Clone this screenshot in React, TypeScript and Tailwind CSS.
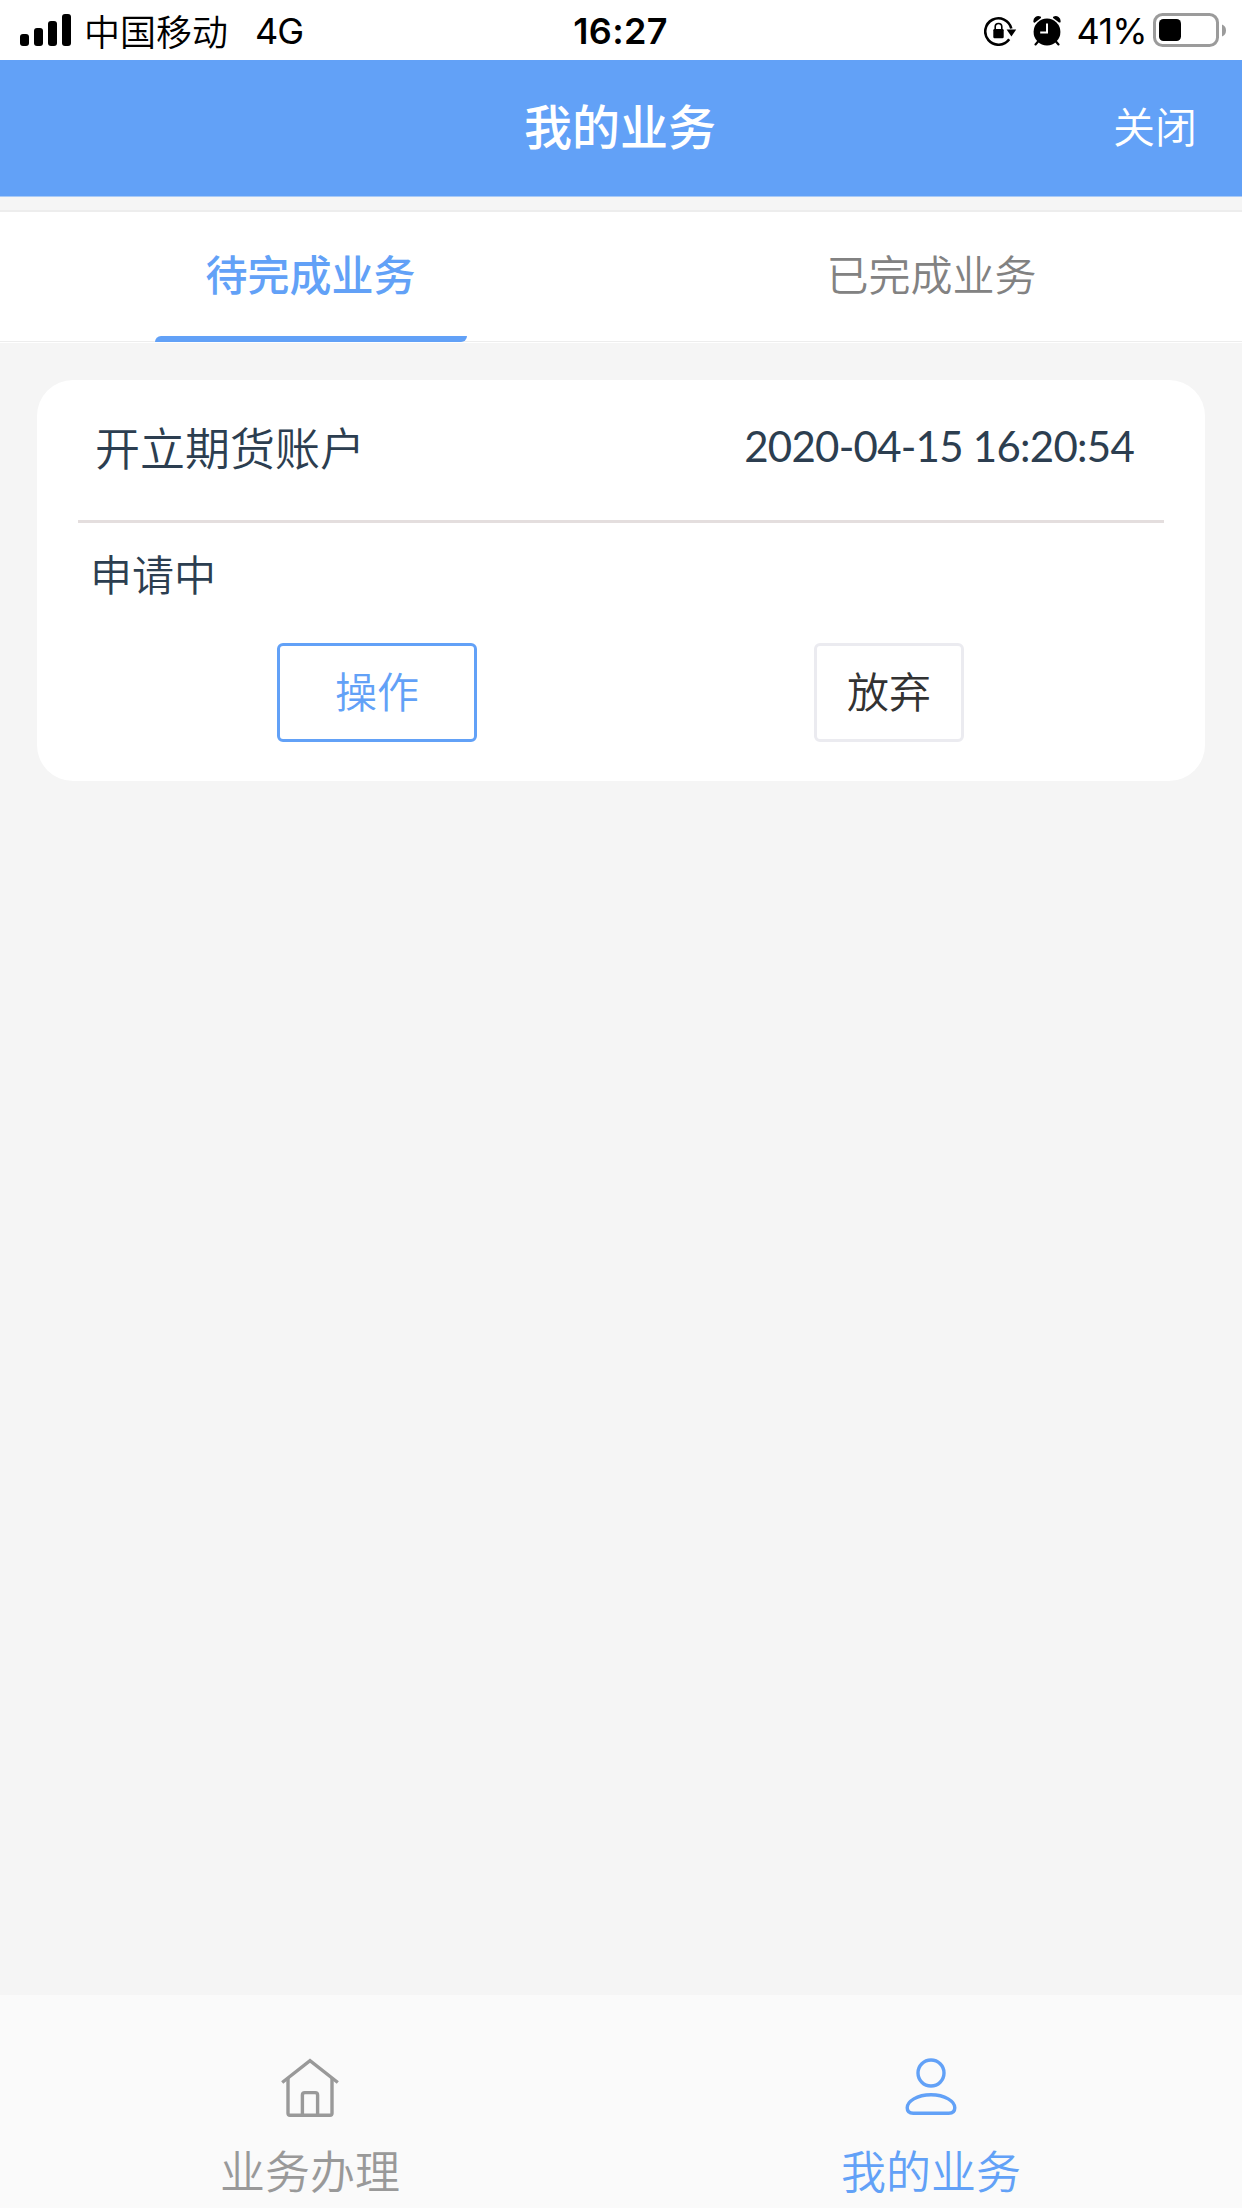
import { useState } from 'react';
import clsx from 'clsx';

interface Business {
  id: number;
  name: string;
  time: string;
  status: string;
}

const pending: Business[] = [
  { id: 1, name: '开立期货账户', time: '2020-04-15 16:20:54', status: '申请中' },
];

const tabs = ['待完成业务', '已完成业务'];

const SignalIcon = () => (
  <svg width="52" height="32" viewBox="0 0 52 32">
    <rect x="0" y="20" width="9" height="12" rx="3" />
    <rect x="14" y="14" width="9" height="18" rx="3" />
    <rect x="28" y="7" width="9" height="25" rx="3" />
    <rect x="42" y="0" width="9" height="32" rx="3" />
  </svg>
);

const RotationLockIcon = () => (
  <svg width="34" height="30" viewBox="0 0 34 30" fill="none">
    <path d="M27.3 12.5A13.2 13.2 0 1 0 25.2 23.2" stroke="#000" strokeWidth="2.6" />
    <path d="M22.6 13.5h9.6l-4.8 7z" fill="#000" />
    <path d="M11.2 14v-3.2a3.3 3.3 0 0 1 6.6 0V14" stroke="#000" strokeWidth="1.6" />
    <rect x="9.300" y="13" width="10.400" height="9.200" rx="1.200" fill="#000" />
  </svg>
);

const AlarmIcon = () => (
  <svg width="28" height="30" viewBox="0 0 28 30" fill="none">
    <path d="M1.4 5.6A4 4 0 0 1 7 1.500z M21 1.500A4 4 0 0 1 26.600 5.600z" fill="#000" stroke="#000" strokeWidth="2" strokeLinejoin="round" />
    <path d="M5.5 25l-3 3.400M22.500 25l3 3.400" stroke="#000" strokeWidth="2.200" strokeLinecap="round" />
    <circle cx="14" cy="16" r="13.400" fill="#000" />
    <path d="M14 7.600v9H7.200" stroke="#fff" strokeWidth="2" />
  </svg>
);

const BatteryIcon = () => (
  <svg width="74" height="34" viewBox="0 0 74 34" fill="none">
    <rect x="1.5" y="1.5" width="63" height="31" rx="8" stroke="#9b9b9b" strokeWidth="3" />
    <rect x="6" y="6" width="22" height="22" rx="4.5" fill="#000" />
    <path d="M69 11.5a6.5 6.5 0 0 1 0 12z" fill="#9b9b9b" />
  </svg>
);

const HomeIcon = () => (
  <svg width="60" height="60" viewBox="0 0 60 60" fill="none" stroke="currentColor" strokeWidth="3.4">
    <path d="M2.200 24.500L30 2.600l27.800 21.900" />
    <path d="M8 20v35.200a2 2 0 0 0 2 2h40a2 2 0 0 0 2-2V20" />
    <path d="M22.400 57V37a2.400 2.400 0 0 1 2.400-2.400h10.400a2.400 2.400 0 0 1 2.400 2.400V57" />
  </svg>
);

const UserIcon = () => (
  <svg width="60" height="60" viewBox="0 0 60 60" fill="none" stroke="currentColor" strokeWidth="3.4">
    <circle cx="30" cy="15" r="13" />
    <path d="M30 36.800c-14 0-23.800 6.600-23.800 13 0 3.600 2.400 5.400 6 5.400h35.600c3.600 0 6-1.800 6-5.400 0-6.400-9.800-13-23.800-13z" />
  </svg>
);

const StatusBar = () => (
  <div className="flex h-[60px] shrink-0 items-center bg-white text-[36px] leading-[60px] text-black">
    <div className="flex flex-1 items-center pl-5">
      <SignalIcon />
      <span className="ml-3 pt-[5px]">中国移动</span>
      <span className="ml-[27px] pt-0.5 font-normal tracking-[-1px]">4G</span>
    </div>
    <span className="mr-1.5 pt-0.5 font-semibold tracking-[0.3px]">16:27</span>
    <div className="flex flex-1 items-center justify-end pr-[15px]">
      <span className="pt-px">
        <RotationLockIcon />
      </span>
      <span className="ml-[15px] pt-px">
        <AlarmIcon />
      </span>
      <span className="ml-4 pt-0.5 font-normal tracking-[-0.7px]">41%</span>
      <span className="ml-1.5">
        <BatteryIcon />
      </span>
    </div>
  </div>
);

const BusinessCard = ({ item }: { item: Business }) => (
  <div className="mx-[37px] h-[401px] rounded-[36px] bg-white pt-[38px]">
    <div className="mx-[41px] flex h-[105px] justify-between border-b-[3px] border-[#e4dede] pr-[30px] pl-[17px] text-[#2c3e50]">
      <span className="pt-0.5 text-[45px] leading-[60px]">{item.name}</span>
      <span className="font-[Lato] text-[42px] leading-[57px] font-normal tracking-[-0.75px]">{item.time}</span>
    </div>
    <div className="pt-[23px] pl-[53px] text-[42px] leading-[60px] text-[#2c3e50]">{item.status}</div>
    <div className="mt-[37px] grid grid-cols-2 pr-[60px] pl-[84px] text-[42px] leading-none">
      <button className="h-[99px] w-[200px] justify-self-center rounded-md border-[3px] border-[#62a1f7] text-[#62a1f7]">
        操作
      </button>
      <button className="h-[99px] w-[150px] justify-self-center rounded-md border-[3px] border-[#ebebf0] text-[#323232]">
        放弃
      </button>
    </div>
  </div>
);

export default function App() {
  const [active, setActive] = useState(0);

  return (
    <div className="flex h-[2208px] w-[1242px] flex-col bg-[#f5f5f5] font-[Inter,'Noto_Sans_CJK_SC',sans-serif] font-[350]">
      <StatusBar />
      <header className="grid h-[137px] shrink-0 grid-cols-3 items-center border-b border-[#a8caf7] bg-[#62a1f7] text-white">
        <h1 className="col-start-2 pr-0.5 text-center text-[48px] leading-[72px] font-medium">我的业务</h1>
        <button className="justify-self-end pr-[45px] text-[42px] leading-[72px]">关闭</button>
      </header>
      <div className="mt-[13px] grid h-[132px] shrink-0 grid-cols-2 border-t-2 border-b border-[#ededed] bg-white shadow-[0_1px_0_#fff]">
        {tabs.map((tab, i) => (
          <button
            key={tab}
            onClick={() => setActive(i)}
            className={clsx(
              'flex flex-col items-center pt-[34px] text-[42px] leading-[60px]',
              active === i ? 'font-medium text-[#62a1f7]' : 'text-[#828282]'
            )}
          >
            {tab}
            {active === i && <span className="mt-[30px] h-1.5 w-[312px] shrink-0 rounded-tl-md rounded-br-md bg-[#62a1f7]" />}
          </button>
        ))}
      </div>
      <main className="flex-1 pt-[38px]">
        {active === 0 && pending.map((item) => <BusinessCard key={item.id} item={item} />)}
      </main>
      <nav className="grid h-[213px] shrink-0 grid-cols-2 bg-[#fafafa] pt-[63px] text-[45px] leading-[60px]">
        <div className="flex flex-col items-center gap-[25px] pr-px text-[#999]">
          <HomeIcon />
          业务办理
        </div>
        <div className="flex flex-col items-center gap-[25px] pr-px text-[#62a1f7]">
          <UserIcon />
          我的业务
        </div>
      </nav>
    </div>
  );
}
